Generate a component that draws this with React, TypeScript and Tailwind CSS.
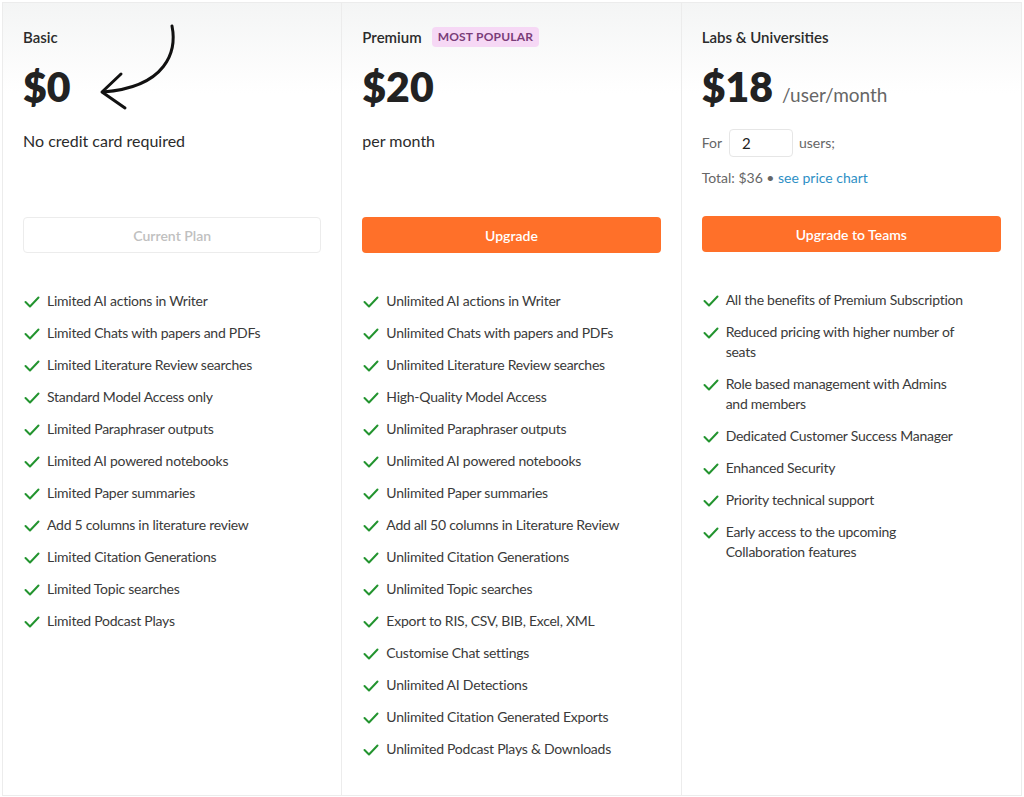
import type { ReactNode } from 'react'

const basicFeatures = [
  'Limited AI actions in Writer',
  'Limited Chats with papers and PDFs',
  'Limited Literature Review searches',
  'Standard Model Access only',
  'Limited Paraphraser outputs',
  'Limited AI powered notebooks',
  'Limited Paper summaries',
  'Add 5 columns in literature review',
  'Limited Citation Generations',
  'Limited Topic searches',
  'Limited Podcast Plays',
]

const premiumFeatures = [
  'Unlimited AI actions in Writer',
  'Unlimited Chats with papers and PDFs',
  'Unlimited Literature Review searches',
  'High-Quality Model Access',
  'Unlimited Paraphraser outputs',
  'Unlimited AI powered notebooks',
  'Unlimited Paper summaries',
  'Add all 50 columns in Literature Review',
  'Unlimited Citation Generations',
  'Unlimited Topic searches',
  'Export to RIS, CSV, BIB, Excel, XML',
  'Customise Chat settings',
  'Unlimited AI Detections',
  'Unlimited Citation Generated Exports',
  'Unlimited Podcast Plays & Downloads',
]

const teamFeatures = [
  'All the benefits of Premium Subscription',
  'Reduced pricing with higher number of seats',
  'Role based management with Admins and members',
  'Dedicated Customer Success Manager',
  'Enhanced Security',
  'Priority technical support',
  'Early access to the upcoming Collaboration features',
]

function Check() {
  return (
    <svg width="16" height="12" viewBox="0 0 16 12" className="shrink-0 mt-[5px]">
      <polyline points="1.5,6 6,10.5 14.5,1.5" fill="none" stroke="#23942f" strokeWidth="2" strokeLinecap="round" strokeLinejoin="round" />
    </svg>
  )
}

function FeatureList({ items }: { items: string[] }) {
  return (
    <ul className="flex flex-col gap-3 mt-[38px]">
      {items.map(f => (
        <li key={f} className="flex gap-[7px] pl-[1px] pr-[34px] text-[14px] leading-5 tracking-[-0.25px] text-[#3a3a3a]">
          <Check />
          <span>{f}</span>
        </li>
      ))}
    </ul>
  )
}

function Column({ children, last }: { children: ReactNode; last?: boolean }) {
  return (
    <div className={`px-5 pt-6 bg-gradient-to-b from-[#f4f5f5] to-white to-[90px] ${last ? '' : 'border-r border-[#ececec]'}`}>
      {children}
    </div>
  )
}

function Arrow() {
  return (
    <svg width="100" height="100" viewBox="0 0 100 100" className="absolute left-[92px] top-[18px]">
      <path d="M77 5 C 82 30, 72 66, 8 71" fill="none" stroke="#111" strokeWidth="3" strokeLinecap="round" />
      <path d="M26 53 L 7 71 L 30 87" fill="none" stroke="#111" strokeWidth="3" strokeLinecap="round" strokeLinejoin="round" />
    </svg>
  )
}

export default function App() {
  return (
    <div className="p-[2px] bg-white" style={{ fontFamily: 'Lato, "Noto Sans", sans-serif' }}>
      <div className="relative grid grid-cols-3 h-[794px] border border-[#ececec] text-[#2b2b2b]">
        <Arrow />
        <Column>
          <div className="h-[190px]">
            <h2 className="text-[15px] font-semibold leading-5">Basic</h2>
            <div className="mt-[18px] text-[41px] font-extrabold leading-[44px] text-[#222]">$0</div>
            <p className="mt-5 text-[16px] leading-6">No credit card required</p>
          </div>
          <button className="w-full h-9 rounded border border-[#ececec] text-[14px] font-semibold text-[#c0c0c0]">Current Plan</button>
          <FeatureList items={basicFeatures} />
        </Column>
        <Column>
          <div className="h-[190px]">
            <div className="flex items-center gap-2 h-5">
              <h2 className="text-[15px] font-semibold leading-5">Premium</h2>
              <span className="ml-[2px] px-[6px] h-5 leading-5 rounded bg-[#f6d8f5] text-[#7a3d79] text-[12px] font-bold tracking-[0.2px]">MOST POPULAR</span>
            </div>
            <div className="mt-[18px] text-[41px] font-extrabold leading-[44px] text-[#222]">$20</div>
            <p className="mt-5 text-[16px] leading-6">per month</p>
          </div>
          <button className="w-full h-9 rounded bg-[#ff7029] text-[14px] font-semibold text-white">Upgrade</button>
          <FeatureList items={premiumFeatures} />
        </Column>
        <Column last>
          <div className="h-[189px]">
            <h2 className="text-[15px] font-semibold leading-5">Labs &amp; Universities</h2>
            <div className="mt-[18px] flex items-baseline gap-[9px]">
              <span className="text-[41px] font-extrabold leading-[44px] text-[#222]">$18</span>
              <span className="text-[19px] text-[#666]">/user/month</span>
            </div>
            <div className="mt-[19px] flex items-center text-[14px] text-[#666]">
              <span>For</span>
              <input
                defaultValue="2"
                className="ml-[7px] mr-[6px] w-16 h-7 rounded border border-[#e6e6e6] px-3 text-[15px] text-[#222] bg-white outline-none"
              />
              <span>users;</span>
            </div>
            <p className="mt-[11px] text-[14px] leading-5 text-[#666]">
              Total: $36 • <span className="text-[#2e8fc5]">see price chart</span>
            </p>
          </div>
          <button className="w-full h-9 rounded bg-[#ff7029] text-[14px] font-semibold text-white">Upgrade to Teams</button>
          <FeatureList items={teamFeatures} />
        </Column>
      </div>
    </div>
  )
}
